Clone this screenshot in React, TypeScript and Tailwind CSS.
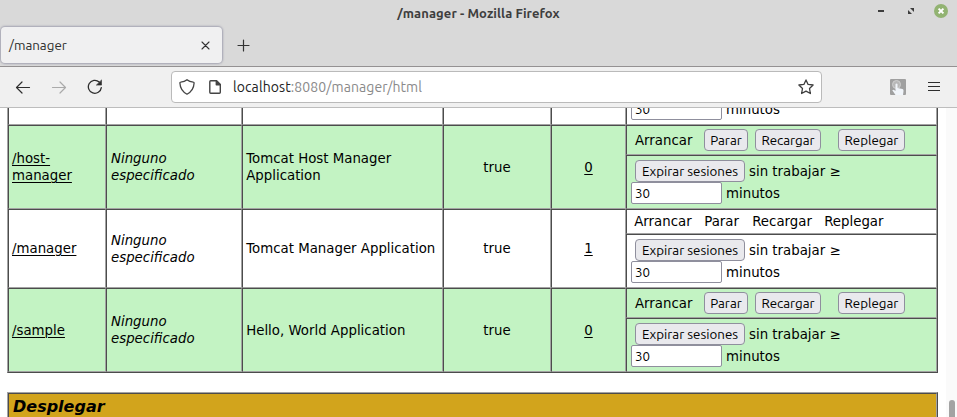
import type { ReactNode } from "react";

const UI = "font-['Ubuntu','Noto_Sans',sans-serif]";

function Cell({ children, className = "" }: { children?: ReactNode; className?: string }) {
  return (
    <div className={`border-l border-t border-r border-b border-l-[#4c4c4c] border-t-[#4c4c4c] border-r-[#a3a3a3] border-b-[#a3a3a3] ${className}`}>
      {children}
    </div>
  );
}

function Button({ children, className = "" }: { children: string; className?: string }) {
  return (
    <button className={`flex h-[22px] shrink-0 items-center justify-center rounded-[4px] border border-[#8f8f9d] bg-[#e9e9ed] pt-px whitespace-nowrap text-[13.333px] leading-[16px] text-black ${UI} ${className}`}>
      <span>{children}</span>
    </button>
  );
}

function Expire() {
  return (
    <Cell className="h-[54px] pt-1 pl-1">
      <div className="flex h-[22px] items-center pl-1">
        <Button className="w-[110px]">Expirar sesiones</Button>
        <span className="ml-[4px] whitespace-nowrap">sin trabajar ≥</span>
      </div>
      <div className="flex h-[22px] items-center">
        <input readOnly value="30" className={`h-[22px] w-[91px] rounded-[2px] border border-[#8f8f9d] bg-white px-[3px] text-[13.333px] text-black outline-none ${UI}`} />
        <span className="ml-[4px]">minutos</span>
      </div>
    </Cell>
  );
}

type App = { path: string[]; name: string[]; sessions: string; self?: boolean };

const apps: App[] = [
  { path: ["/host-", "manager"], name: ["Tomcat Host Manager", "Application"], sessions: "0" },
  { path: ["/manager"], name: ["Tomcat Manager Application"], sessions: "1", self: true },
  { path: ["/sample"], name: ["Hello, World Application"], sessions: "0" },
];

const lines = (items: string[]) => items.map((s) => <div key={s}>{s}</div>);

const GRID = "grid grid-cols-[98px_136px_201px_108px_75px_311px]";

function Row({ app }: { app: App }) {
  return (
    <div className={`${GRID} ${app.self ? "bg-white" : "bg-[#c3f3c3]"}`}>
      <Cell className="flex items-center pl-[3px]">
        <a className="underline decoration-1 underline-offset-2">{lines(app.path)}</a>
      </Cell>
      <Cell className="flex items-center pl-1 italic"><div>{lines(["Ninguno", "especificado"])}</div></Cell>
      <Cell className="flex items-center pl-[3.2px] whitespace-nowrap"><div>{lines(app.name)}</div></Cell>
      <Cell className="flex items-center justify-center">true</Cell>
      <Cell className="flex items-center justify-center"><a className="underline decoration-1 underline-offset-2">{app.sessions}</a></Cell>
      <div>
        {app.self ? (
          <Cell className="flex h-[25px] items-center pl-[7.2px]">
            <span className="w-[70px]">Arrancar</span>
            <span className="w-[48px]">Parar</span>
            <span className="w-[72px]">Recargar</span>
            <span>Replegar</span>
          </Cell>
        ) : (
          <Cell className="flex h-[30px] items-center pl-[8px]">
            <span className="w-[69px]">Arrancar</span>
            <Button className="w-[44px]">Parar</Button>
            <Button className="ml-[7px] w-[66px]">Recargar</Button>
            <Button className="ml-[17px] w-[67px]">Replegar</Button>
          </Cell>
        )}
        <Expire />
      </div>
    </div>
  );
}

function TitleBar() {
  return (
    <div className="grid h-[26px] grid-cols-[1fr_auto_1fr] items-center">
      <div />
      <div className="text-[13px] leading-4 font-semibold tracking-[0.08px] whitespace-nowrap text-[#3e3e3e]">/manager - Mozilla Firefox</div>
      <div className="flex items-center justify-end pr-[9px] pb-[4px]">
        <div className="mr-[24px] h-[2px] w-[6px] bg-[#3c3c3c]" />
        <svg width="6" height="6" viewBox="0 0 6 6" className="mr-[20px]" fill="#3c3c3c">
          <path d="M2 0h4v4zM0 2l4 4H0z" />
        </svg>
        <svg width="14" height="14" viewBox="0 0 14 14">
          <circle cx="7" cy="7" r="7" fill="#92b372" />
          <path d="M4.6 4.6l4.8 4.8M9.4 4.6L4.6 9.4" stroke="#fff" strokeWidth="2" />
        </svg>
      </div>
    </div>
  );
}

function Tabs() {
  return (
    <div className="flex h-[40px] items-start pl-px">
      <div className="mt-px flex h-[36px] w-[221px] items-center justify-between rounded-[4px] bg-[#f0f0f1] pr-[12px] pl-[8px] text-[13.333px] text-[#2e2e2e] shadow-[0_0_2px_1px_rgba(120,120,145,0.55)]">
        <span className="pt-px">/manager</span>
        <svg width="9" height="9" viewBox="0 0 9 9" stroke="#333" strokeWidth="1.1" strokeLinecap="round"><path d="M1 1l7 7M8 1L1 8" /></svg>
      </div>
      <svg width="13" height="13" viewBox="0 0 13 13" className="mt-[13px] ml-[15px]" stroke="#333" strokeWidth="1.2" strokeLinecap="round"><path d="M6.500 1v11M1 6.500h11" /></svg>
    </div>
  );
}

function Toolbar() {
  return (
    <div className="flex h-[42px] items-center border-t border-b border-t-[#949192] border-b-[#bdbdbd] bg-[#f0f0f0]">
      <svg width="16" height="16" viewBox="0 0 16 16" className="ml-[15px]" fill="none" stroke="#2e2e2e" strokeWidth="1.2" strokeLinecap="round" strokeLinejoin="round"><path d="M14.500 8.500H1.500M7 3L1.500 8.500 7 14" /></svg>
      <svg width="16" height="16" viewBox="0 0 16 16" className="ml-[20px]" fill="none" stroke="#aaa" strokeWidth="1.2" strokeLinecap="round" strokeLinejoin="round"><path d="M1.500 8.500h13M9 3L14.500 8.500 9 14" /></svg>
      <svg width="16" height="16" viewBox="0 0 16 16" className="ml-[20px]" fill="none" stroke="#2e2e2e" strokeWidth="1.3" strokeLinecap="round">
        <path d="M14.300 8.600A6.500 6.500 0 1 1 12.200 3" />
        <path d="M14.500 1.300v4.800H9.700z" fill="#2e2e2e" strokeWidth=".6" strokeLinejoin="round" />
      </svg>
      <div className="ml-[68px] flex h-[32px] w-[651px] items-center rounded-[4px] border border-[#bababa] bg-white">
        <svg width="16" height="16" viewBox="0 0 16 16" className="ml-[7px]" fill="none" stroke="#444" strokeWidth="1.3" strokeLinejoin="round">
          <path d="M8 .8C6.300 2.300 3.800 3 1.700 3.100c-.5 0-.8.4-.8.9C1.100 8.500 3.300 12.700 8 15.200c4.700-2.500 6.900-6.700 7.100-11.200 0-.5-.3-.9-.8-.9C12.200 3 9.700 2.300 8 .8z" />
        </svg>
        <svg width="12" height="14" viewBox="0 0 12 14" className="ml-[14px]" fill="none" stroke="#444" strokeWidth="1.4" strokeLinejoin="round">
          <path d="M1.700.8h5.800l3.800 3.800v7.700q0 .9-.9.9H1.700q-.9 0-.9-.9V1.700q0-.9.9-.9z" />
          <path d="M7.300.8v4h4z" fill="#444" />
        </svg>
        <span className="ml-[12px] text-[14px] leading-5 tracking-[0.09px] whitespace-nowrap text-[#8a8a8a]"><span className="text-[#222]">localhost</span>:8080/manager/html</span>
        <svg width="16" height="16" viewBox="0 0 16 16" className="mr-[7px] ml-auto" fill="none" stroke="#3d3d3d" strokeWidth="1.3" strokeLinejoin="round">
          <path d="M8 .9l2.100 4.500 5 .6-3.600 3.500.9 5-4.400-2.400-4.400 2.400.9-5L.9 6l5-.6z" />
        </svg>
      </div>
      <svg width="16" height="16" viewBox="0 0 16 16" className="ml-[68px]">
        <rect width="16" height="16" rx="1" fill="#a0a0a0" />
        <circle cx="6.500" cy="5.500" r="4" fill="#b8b8b8" stroke="#cfcfcf" strokeWidth="1" />
        <path d="M5.500 5q1-1 2 0v4l5 1q1.300.4 1 2l-.5 4H5.500L2.300 11.300q.9-1.200 2.200 0l1 .8z" fill="#f1f5fa" />
      </svg>
      <svg width="12" height="10" viewBox="0 0 12 10" className="ml-[22px]" stroke="#2e2e2e" strokeWidth="1"><path d="M0 .5h12M0 4.500h12M0 8.500h12" /></svg>
    </div>
  );
}

export default function App() {
  return (
    <div className={`flex h-[417px] w-[957px] flex-col overflow-hidden bg-[#d9d9d9] ${UI}`}>
      <TitleBar />
      <Tabs />
      <Toolbar />
      <div className="flex h-[309px] overflow-hidden bg-white">
        <div className="w-[946px] overflow-hidden pl-[7px] font-['DejaVu_Sans',sans-serif] text-[13.333px] leading-[17px] text-black">
          <div className="-mt-[37px] w-[931px] border-r border-b border-l border-r-[#4c4c4c] border-b-[#4c4c4c] border-l-[#a3a3a3]">
            <div className={GRID}>
              <Cell /><Cell /><Cell /><Cell /><Cell />
              <Expire />
            </div>
            {apps.map((a) => <Row key={a.path[0]} app={a} />)}
          </div>
          <div className="mt-[19px] w-[931px] border-t border-r border-l border-t-[#a3a3a3] border-r-[#4c4c4c] border-l-[#a3a3a3]">
            <Cell className="h-[30px] bg-[#d2a41c] pt-[3px] pl-[4px] text-[16px] leading-[19px] font-bold italic">Desplegar</Cell>
          </div>
        </div>
        <div className="flex w-[11px] justify-center bg-[#fafafa] pt-[292px]">
          <div className="h-[30px] w-[6px] rounded-full bg-[#a3a3a3]" />
        </div>
      </div>
    </div>
  );
}
